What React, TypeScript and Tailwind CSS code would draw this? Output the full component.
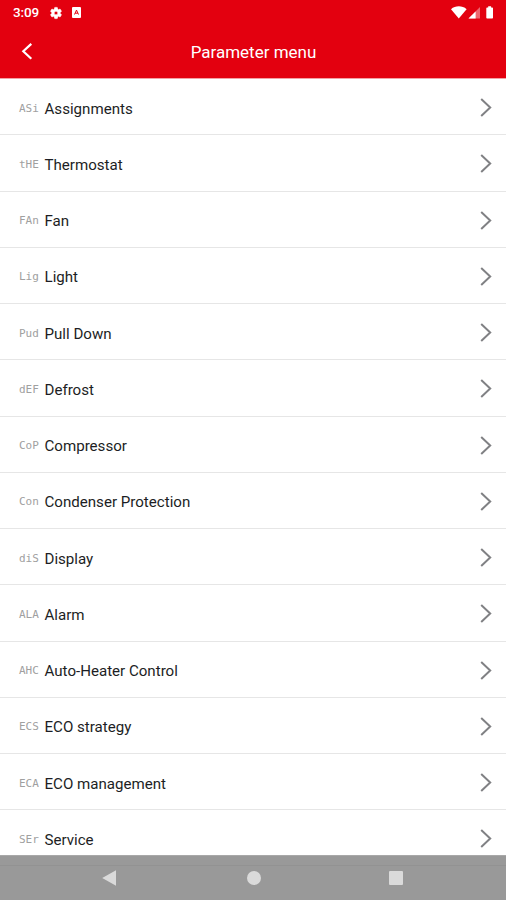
type Parameter = {
  code: string;
  label: string;
};

const parameters: Parameter[] = [
  { code: "ASi", label: "Assignments" },
  { code: "tHE", label: "Thermostat" },
  { code: "FAn", label: "Fan" },
  { code: "Lig", label: "Light" },
  { code: "Pud", label: "Pull Down" },
  { code: "dEF", label: "Defrost" },
  { code: "CoP", label: "Compressor" },
  { code: "Con", label: "Condenser Protection" },
  { code: "diS", label: "Display" },
  { code: "ALA", label: "Alarm" },
  { code: "AHC", label: "Auto-Heater Control" },
  { code: "ECS", label: "ECO strategy" },
  { code: "ECA", label: "ECO management" },
  { code: "SEr", label: "Service" },
];

function StatusBar() {
  return (
    <div className="flex h-[25px] items-center pl-[13px] pr-[12px]">
      <span className="text-[13.5px] font-medium leading-none tracking-[-0.1px]">3:09</span>
      <svg className="ml-[10px] h-[14px] w-[14px]" viewBox="0 0 24 24" fill="currentColor" aria-hidden="true">
        <path
          fillRule="evenodd"
          stroke="currentColor"
          strokeWidth="1"
          d="M19.14 12.94c.04-.3.06-.61.06-.94s-.02-.64-.07-.94l2.03-1.58a.5.5 0 0 0 .12-.61l-1.92-3.32a.49.49 0 0 0-.59-.22l-2.39.96a7 7 0 0 0-1.62-.94L14.4 2.81A.48.48 0 0 0 13.92 2.4h-3.84a.47.47 0 0 0-.47.41l-.36 2.54a7.3 7.3 0 0 0-1.62.94l-2.39-.96a.48.48 0 0 0-.59.22L2.74 8.87a.47.47 0 0 0 .12.61l2.03 1.58c-.05.3-.09.63-.09.94s.02.64.07.94l-2.03 1.58a.5.5 0 0 0-.12.61l1.92 3.32c.12.22.37.29.59.22l2.39-.96c.5.38 1.03.7 1.62.94l.36 2.54c.05.24.24.41.48.41h3.84c.24 0 .44-.17.47-.41l.36-2.54a7 7 0 0 0 1.62-.94l2.39.96c.22.08.47 0 .59-.22l1.92-3.32a.48.48 0 0 0-.12-.61ZM12 15.2a3.2 3.2 0 1 1 0-6.4 3.2 3.2 0 0 1 0 6.4Z"
        />
      </svg>
      <svg className="ml-[9px] h-[11px] w-[9px]" viewBox="0 0 9 11" aria-hidden="true">
        <rect width="9" height="11" rx="1" fill="currentColor" />
        <path d="M2.5 7.5 4.5 3.1 6.5 7.5M3.2 6.2H5.8" fill="none" stroke="#e3000f" strokeWidth="1" />
      </svg>
      <svg className="ml-auto h-[13px] w-[43px]" viewBox="0 0 43 13" fill="currentColor" aria-hidden="true">
        <path d="M0 3.2C4.4-.6 11.2-.6 15.6 3.2L7.8 12.6Z" />
        <path d="M29 1v11.6H17.5Z" opacity="0.4" />
        <path d="M24.6 5.5v7.1h-7.1Z" />
        <path d="M37.2 1.4V.3h2.9v1.1h1.1q.8 0 .8.8v9.6q0 .8-.8.8h-5.1q-.8 0-.8-.8V2.2q0-.8.8-.8Z" />
      </svg>
    </div>
  );
}

function TitleBar() {
  return (
    <div className="grid h-[53px] grid-cols-[60px_1fr_59px] items-center">
      <button type="button" aria-label="Back" className="pl-[21px]">
        <svg className="h-[17px] w-[12px]" viewBox="0 0 12 17" fill="none" stroke="currentColor" strokeWidth="2.2" aria-hidden="true">
          <path d="M10.3 .9 2.3 8.3l8 7.4" />
        </svg>
      </button>
      <h1 className="pt-[1px] text-center text-[17px] leading-6">Parameter menu</h1>
    </div>
  );
}

function ParameterRow({ code, label }: Parameter) {
  return (
    <li className="flex h-[56.25px] shrink-0 items-center border-b border-[#e6e6e6] pl-[19px] pr-[14px]">
      <span className="w-[25.5px] pt-[4px] font-['DejaVu_Sans_Mono','Liberation_Mono',monospace] text-[11px] leading-4 text-[#a0a0a0]">
        {code}
      </span>
      <span className="pt-[4px] text-[15.1px] leading-5 text-[#1c1e24]">{label}</span>
      <svg className="ml-auto mt-[2px] h-[19px] w-[12px]" viewBox="0 0 12 19" fill="none" stroke="#808184" strokeWidth="2" aria-hidden="true">
        <path d="M1.2 1 10.2 9.5l-9 8.5" />
      </svg>
    </li>
  );
}

function NavigationBar() {
  return (
    <nav className="h-[45px] shrink-0 border-t border-[#a8a8a8] bg-[#999999] text-[#dadada]">
      <div className="mt-[9px] flex h-[35px] items-center border-t border-[#929292] pb-[11px] pl-[102px] pr-[103px]">
        <svg className="h-[16px] w-[14px]" viewBox="0 0 14 16" fill="currentColor" aria-hidden="true">
          <path d="M14 .3v15.4L.2 8Z" />
        </svg>
        <span className="ml-[131px] size-[14px] rounded-full bg-current" />
        <span className="ml-auto size-[14px] rounded-[1px] bg-current" />
      </div>
    </nav>
  );
}

export default function App() {
  return (
    <div className="flex h-[900px] w-[506px] flex-col overflow-hidden bg-white font-['Roboto',sans-serif]">
      <header className="shrink-0 bg-[#e3000f] text-white">
        <StatusBar />
        <TitleBar />
      </header>
      <ul className="flex min-h-0 flex-1 flex-col overflow-hidden border-t border-[#f3a0a4]">
        {parameters.map((parameter) => (
          <ParameterRow key={parameter.code} {...parameter} />
        ))}
      </ul>
      <NavigationBar />
    </div>
  );
}
